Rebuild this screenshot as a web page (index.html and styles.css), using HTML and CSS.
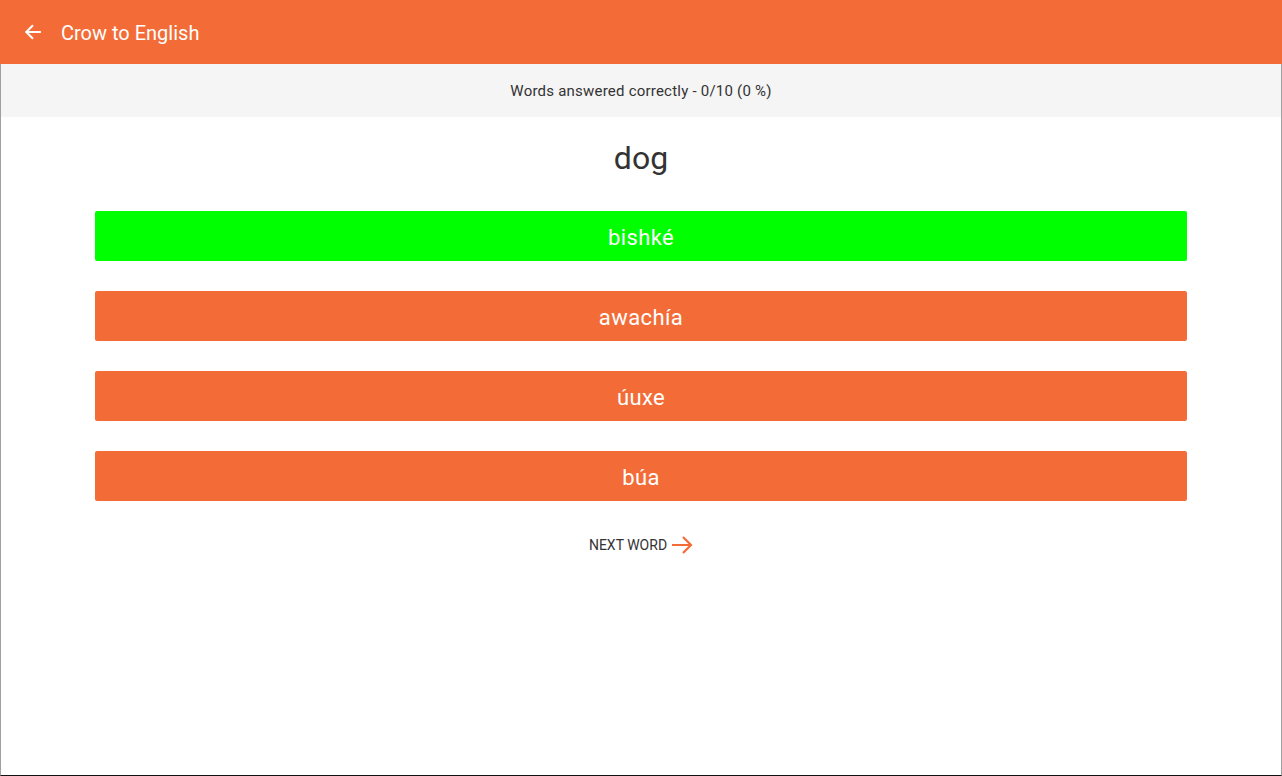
FILE: index.html
```html
<!DOCTYPE html>
<html>
<head>
<meta charset="utf-8">
<link rel="stylesheet" href="styles.css">
</head>
<body>
<div class="app">
  <header class="toolbar">
    <svg class="back" width="18" height="18" viewBox="0 0 16 16"><path d="M15 8H2M8 2L2 8l6 6" fill="none" stroke="#fff" stroke-width="1.8"/></svg>
    <span class="title">Crow to English</span>
  </header>
  <div class="frame">
    <div class="stats">Words answered correctly - 0/10 (0 %)</div>
    <main class="quiz">
      <div class="word">dog</div>
      <div class="options">
        <button class="opt correct">bishké</button>
        <button class="opt">awachía</button>
        <button class="opt">úuxe</button>
        <button class="opt">búa</button>
      </div>
      <div class="next">NEXT WORD
        <svg width="22" height="18" viewBox="0 0 22 18"><path d="M1 9h19M12 1l8 8-8 8" fill="none" stroke="#f36c37" stroke-width="2.2"/></svg>
      </div>
    </main>
  </div>
</div>
</body>
</html>
```
FILE: styles.css
```css
html, body { margin: 0; padding: 0; }
body { font-family: Roboto, "Noto Sans", sans-serif; background: #fff; }
.app { width: 1282px; height: 776px; display: flex; flex-direction: column; box-sizing: border-box; }
.toolbar { height: 64px; background: #f36c37; display: flex; align-items: center; flex-shrink: 0; }
.back { margin-left: 24px; margin-top: 0; }
.title { color: #fff; font-size: 20px; margin-left: 19px; padding-top: 2px; }
.frame { flex: 1; border-left: 1px solid #a0a0a0; border-right: 1px solid #a0a0a0; border-bottom: 1px solid #111; display: flex; flex-direction: column; }
.stats { height: 53px; background: #f5f5f5; display: flex; align-items: center; justify-content: center; font-size: 15px; color: #333; letter-spacing: 0.22px; }
.quiz { display: flex; flex-direction: column; align-items: center; }
.word { font-size: 32px; color: #333; margin-top: 19px; height: 44px; line-height: 44px; }
.options { display: flex; flex-direction: column; gap: 30px; width: 1092px; margin-top: 31px; }
.opt { height: 50px; border: none; border-radius: 2px; background: #f36c37; color: #fff; font-family: Roboto, sans-serif; font-size: 22px; padding: 2px 0 0; letter-spacing: 0.4px; }
.opt.correct { background: #00ff00; }
.next { margin-top: 35px; display: flex; align-items: center; gap: 4px; font-size: 14px; color: #333; }
```
